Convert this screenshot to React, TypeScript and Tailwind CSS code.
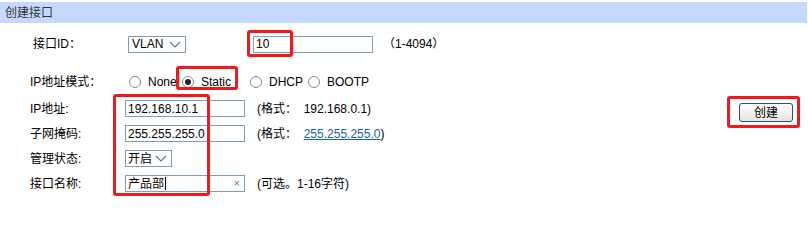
import React from "react";

const font = { fontFamily: '"Liberation Sans", Arial, "Noto Sans CJK SC", sans-serif' };

function Radio({ checked, label, w }: { checked?: boolean; label: string; w?: string }) {
  return (
    <div className={`flex items-center ${w ?? ""}`}>
      <span className="w-[12px] h-[12px] rounded-full border border-[#8a8a8a] bg-white flex items-center justify-center shrink-0">
        {checked && <span className="w-[6px] h-[6px] rounded-full bg-[#222]" />}
      </span>
      <span className="ml-[7px] text-[12px] text-black">{label}</span>
    </div>
  );
}

function Chevron() {
  return (
    <svg width="12" height="7" viewBox="0 0 12 7" className="shrink-0">
      <path d="M1 1 L6 6 L11 1" fill="none" stroke="#6d6d6d" strokeWidth="1.1" />
    </svg>
  );
}

function Field({ value, w = "w-[120px]", clear, caret }: { value: string; w?: string; clear?: boolean; caret?: boolean }) {
  return (
    <div className={`${w} h-[17px] border border-[#7f9db9] bg-white flex items-center pl-[2px] pr-[4px]`}>
      <span className="text-[12px] text-black leading-none">{value}</span>
      {caret && <span className="w-[1px] h-[13px] bg-black ml-[1px]" />}
      <span className="flex-1" />
      {clear && <span className="text-[11px] text-[#777] leading-none">×</span>}
    </div>
  );
}

export default function App() {
  return (
    <div className="relative w-[808px] h-[200px] bg-white pt-[2px] text-[12px] text-black" style={font}>
      <div className="h-[21px] w-[807px] bg-[#c5d9ff] flex items-center pl-[5px] text-[12px] text-[#333]">
        创建接口
      </div>

      {/* Row 1 */}
      <div className="h-[42px] flex items-center pl-[33px]">
        <div className="w-[95px]">接口ID：</div>
        <div className="w-[58px] h-[17px] border border-[#7f9db9] bg-white flex items-center justify-between pl-[3px] pr-[4px]">
          <span>VLAN</span>
          <Chevron />
        </div>
        <div className="ml-[67px]">
          <Field value="10" />
        </div>
        <div className="ml-[10px]">（1-4094）</div>
      </div>

      {/* Row 2 */}
      <div className="h-[31px] flex items-center pl-[30px] pt-[3px]">
        <div className="w-[99px]">IP地址模式：</div>
        <Radio label="None" w="w-[53px]" />
        <Radio label="Static" checked w="w-[68px]" />
        <Radio label="DHCP" w="w-[58px]" />
        <Radio label="BOOTP" />
      </div>

      {/* Rows 3-6 with button */}
      <div className="flex">
        <div className="flex flex-col pl-[30px]">
          <div className="h-[25px] flex items-center">
            <div className="w-[95px]">IP地址:</div>
            <Field value="192.168.10.1" />
            <div className="ml-[12px]">(格式：&nbsp; 192.168.0.1)</div>
          </div>
          <div className="h-[25px] flex items-center">
            <div className="w-[95px]">子网掩码:</div>
            <Field value="255.255.255.0" />
            <div className="ml-[12px]">
              (格式：&nbsp; <span className="text-[#1a5fb4] underline">255.255.255.0</span>)
            </div>
          </div>
          <div className="h-[25px] flex items-center">
            <div className="w-[95px]">管理状态:</div>
            <div className="w-[47px] h-[17px] border border-[#7f9db9] bg-white flex items-center justify-between pl-[2px] pr-[4px]">
              <span>开启</span>
              <Chevron />
            </div>
          </div>
          <div className="h-[25px] flex items-center">
            <div className="w-[95px]">接口名称:</div>
            <Field value="产品部" clear caret />
            <div className="ml-[12px]">(可选。1-16字符)</div>
          </div>
        </div>
        <div className="flex-1 flex justify-end pr-[15px] pt-[7px]">
          <button
            className="w-[54px] h-[19px] rounded-[3px] border border-[#2c4f7c] bg-gradient-to-b from-white to-[#e6e4dc] text-[12px] text-black flex items-center justify-center"
            style={font}
          >
            创建
          </button>
        </div>
      </div>

      {/* Red annotation boxes */}
      <div className="absolute left-[247px] top-[30px] w-[46px] h-[27px] border-[3px] border-[#f5181a] rounded-[3px]" />
      <div className="absolute left-[176px] top-[66px] w-[62px] h-[24px] border-[3px] border-[#f5181a] rounded-[3px]" />
      <div className="absolute left-[113px] top-[94px] w-[97px] h-[102px] border-[3px] border-[#f5181a] rounded-[3px]" />
      <div className="absolute left-[727px] top-[96px] w-[73px] h-[32px] border-[3px] border-[#f5181a] rounded-[3px]" />
    </div>
  );
}
